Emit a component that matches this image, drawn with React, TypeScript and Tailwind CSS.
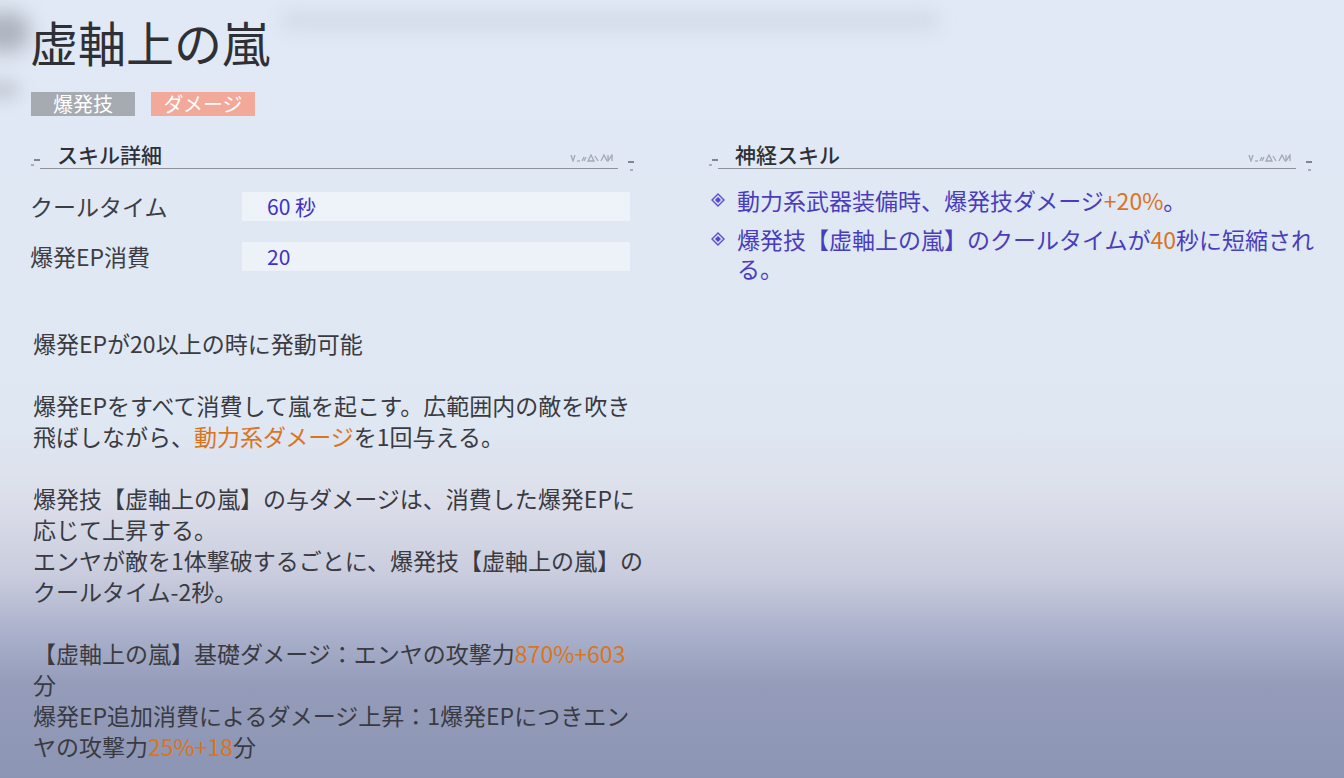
import type { ReactNode } from "react";

const font = { fontFamily: '"Noto Sans CJK JP", "Noto Sans", sans-serif' };

function Hi({ children }: { children: ReactNode }) {
  return <span className="text-[#d9751f]">{children}</span>;
}

function Ornament() {
  return (
    <svg width="46" height="8" viewBox="0 0 46 8" className="mb-[6px]">
      <g stroke="#a4a8b3" strokeWidth="1.3" fill="none">
        <path d="M1 1 L3 7 L5 1" />
        <path d="M7 7 L10 7" />
        <path d="M12 7 L14 3 M14 7 L16 3" />
        <path d="M18 7 L21 1 L24 7 Z" />
        <path d="M25 2 L28 7" />
        <path d="M31 7 L34 1 L37 7" />
        <path d="M38 1 L38 7 L42 1 L42 7" />
      </g>
    </svg>
  );
}

function SectionHeader({ title }: { title: string }) {
  return (
    <div className="flex items-end h-[31px]">
      <div className="w-[10px] flex flex-col items-end gap-[3px] pb-[3px]">
        <span className="block h-[2px] w-[6px] bg-[#80858f]" />
        <span className="block h-[2px] w-[3px] bg-[#a9adb6] mr-[6px]" />
      </div>
      <div className="flex-1 flex items-end justify-between border-b border-[#8e929b] pl-[17px] pr-[2px]">
        <span className="text-[21px] leading-[28px] font-medium text-[#2f3037]">{title}</span>
        <Ornament />
      </div>
      <div className="w-[16px] flex flex-col items-end gap-[6px] -mb-[2px]">
        <span className="block h-[2px] w-[6px] bg-[#80858f]" />
        <span className="block h-[2px] w-[3px] bg-[#a9adb6] mr-[1px]" />
      </div>
    </div>
  );
}

function StatRow({ label, value }: { label: string; value: string }) {
  return (
    <div className="flex items-center h-[29px]">
      <div className="w-[212px] text-[23px] text-[#3d3e45] whitespace-nowrap">{label}</div>
      <div className="flex-1 h-full mr-[4px] bg-white/45 flex items-center pl-[25px] text-[21px] text-[#3f30cc]">
        {value}
      </div>
    </div>
  );
}

function Diamond() {
  return (
    <svg width="14" height="14" viewBox="0 0 14 14" className="shrink-0 mt-[7px]">
      <path d="M7 1 L13 7 L7 13 L1 7 Z" fill="#dcdcf4" stroke="#5a4fd0" strokeWidth="1.4" />
      <path d="M7 4 L10 7 L7 10 L4 7 Z" fill="#5246cc" />
    </svg>
  );
}

export default function App() {
  return (
    <div
      style={font}
      className="relative w-[1344px] h-[778px] overflow-hidden bg-[linear-gradient(180deg,#e0e9f5_0%,#dfe7f2_55%,#dcdfea_64%,#c9ccdd_74%,#acb2cc_81%,#949cba_88%,#8c95b3_100%)]"
    >
      <div className="absolute -left-[20px] top-[12px] w-[50px] h-[40px] rounded-full bg-[#8a8f99]/60 blur-[10px]" />
      <div className="absolute -left-[20px] top-[80px] w-[40px] h-[20px] rounded-full bg-[#a0a6b0]/40 blur-[8px]" />
      <div className="absolute left-[280px] top-[10px] w-[660px] h-[22px] rounded-full bg-[#c9d3e0]/50 blur-[8px]" />

      <div className="relative px-[30px] pt-[10px]">
        <h1 className="text-[48px] leading-[62px] text-[#2f3036] font-normal">虚軸上の嵐</h1>
        <div className="mt-[20px] flex gap-[16px] pl-[1px]">
          <span className="w-[104px] h-[24px] bg-[#a6aab1] text-white text-[20px] leading-[24px] text-center">爆発技</span>
          <span className="w-[104px] h-[24px] bg-[#f2a999] text-white text-[20px] leading-[24px] text-center">ダメージ</span>
        </div>

        <div className="mt-[22px] flex gap-[74px]">
          <div className="w-[604px]">
            <SectionHeader title="スキル詳細" />
            <div className="mt-[23px] flex flex-col gap-[21px]">
              <StatRow label="クールタイム" value="60 秒" />
              <StatRow label="爆発EP消費" value="20" />
            </div>
            <div className="mt-[57px] pl-[3px] text-[23px] leading-[31px] text-[#3a3b42] whitespace-nowrap">
              <p>爆発EPが20以上の時に発動可能</p>
              <p className="mt-[31px]">
                爆発EPをすべて消費して嵐を起こす。広範囲内の敵を吹き
                <br />
                飛ばしながら、<Hi>動力系ダメージ</Hi>を1回与える。
              </p>
              <p className="mt-[31px]">
                爆発技【虚軸上の嵐】の与ダメージは、消費した爆発EPに
                <br />
                応じて上昇する。
                <br />
                エンヤが敵を1体撃破するごとに、爆発技【虚軸上の嵐】の
                <br />
                クールタイム-2秒。
              </p>
              <p className="mt-[31px]">
                【虚軸上の嵐】基礎ダメージ：エンヤの攻撃力<Hi>870%+603</Hi>
                <br />
                分
                <br />
                爆発EP追加消費によるダメージ上昇：1爆発EPにつきエン
                <br />
                ヤの攻撃力<Hi>25%+18</Hi>分
              </p>
            </div>
          </div>

          <div className="w-[604px]">
            <SectionHeader title="神経スキル" />
            <ul className="mt-[17px] flex flex-col gap-[10px] text-[23px] leading-[29px] text-[#4a3dbd]">
              <li className="flex gap-[12px] pl-[3px]">
                <Diamond />
                <span className="whitespace-nowrap">
                  動力系武器装備時、爆発技ダメージ<Hi>+20%</Hi>。
                </span>
              </li>
              <li className="flex gap-[12px] pl-[3px]">
                <Diamond />
                <span className="whitespace-nowrap">
                  爆発技【虚軸上の嵐】のクールタイムが<Hi>40</Hi>秒に短縮され
                  <br />
                  る。
                </span>
              </li>
            </ul>
          </div>
        </div>
      </div>
    </div>
  );
}
